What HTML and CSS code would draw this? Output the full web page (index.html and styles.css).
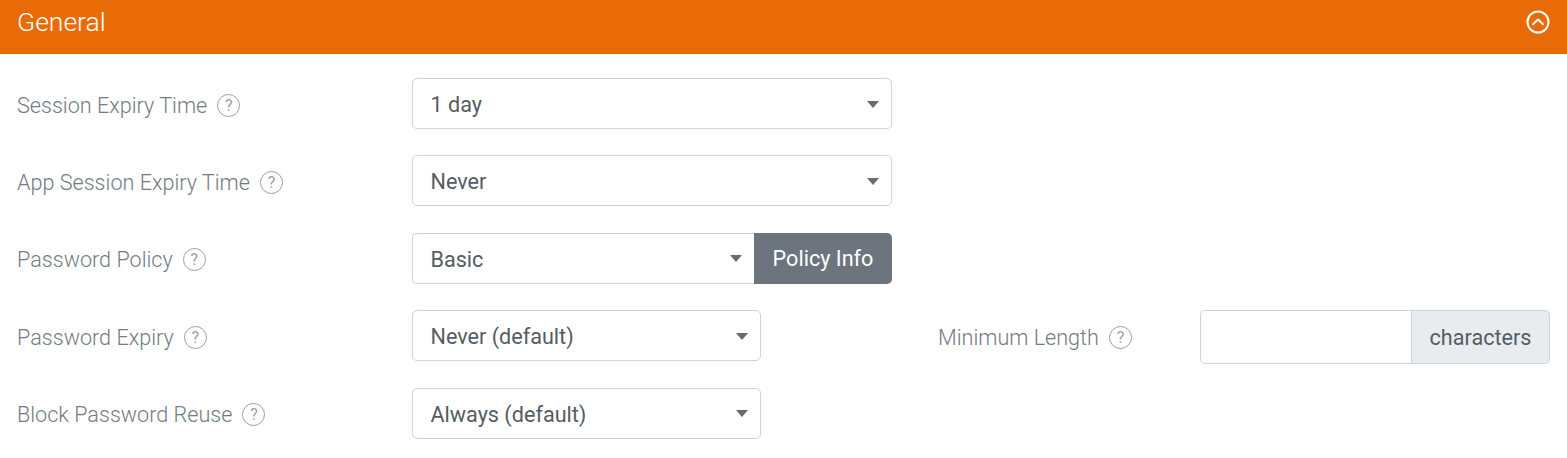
FILE: index.html
```html
<!DOCTYPE html>
<html lang="en">
<head>
    <meta charset="UTF-8">
    <title>General settings</title>
    <link rel="stylesheet" href="styles.css">
</head>
<body>
    <header class="panel-header">
        <h2>General</h2>
        <svg class="collapse-icon" width="24" height="24" viewBox="0 0 24 24" fill="none" stroke="#fff" stroke-width="2">
            <circle cx="12" cy="12" r="10.5"/>
            <path d="M7 14.2l5-4.6 5 4.6" stroke-linecap="round" stroke-linejoin="round"/>
        </svg>
    </header>
    <main class="panel-body">
        <div class="row">
            <div class="label">Session Expiry Time <span class="help">?</span></div>
            <div class="select wide"><span>1 day</span><i class="caret"></i></div>
        </div>
        <div class="row">
            <div class="label">App Session Expiry Time <span class="help">?</span></div>
            <div class="select wide"><span>Never</span><i class="caret"></i></div>
        </div>
        <div class="row">
            <div class="label">Password Policy <span class="help">?</span></div>
            <div class="group wide">
                <div class="select joined"><span>Basic</span><i class="caret"></i></div>
                <button class="info-btn" type="button">Policy Info</button>
            </div>
        </div>
        <div class="row">
            <div class="label">Password Expiry <span class="help">?</span></div>
            <div class="select short"><span>Never (default)</span><i class="caret"></i></div>
            <div class="label second">Minimum Length <span class="help">?</span></div>
            <div class="input-group">
                <input type="text" aria-label="Minimum Length">
                <span class="addon">characters</span>
            </div>
        </div>
        <div class="row">
            <div class="label">Block Password Reuse <span class="help">?</span></div>
            <div class="select short"><span>Always (default)</span><i class="caret"></i></div>
        </div>
    </main>
</body>
</html>
```

FILE: styles.css
```css
:root {
    --orange: #e96b07;
    --border: #ced4da;
    --text: #555c63;
    --label: #737b84;
}
* {
    box-sizing: border-box;
}
body {
    margin: 0;
    background-color: #fff;
    font-family: Roboto, "Liberation Sans", sans-serif;
    font-size: 21.6px;
    color: var(--text);
}
.panel-header {
    display: flex;
    justify-content: space-between;
    align-items: center;
    height: 54px;
    padding: 0 17px 9px 17px;
    background-color: var(--orange);
    border-bottom: 1px solid #d9640a;
    color: #fff;
}
.panel-header h2 {
    margin: 0 0 1px 0;
    font-size: 26.5px;
    font-weight: 300;
}
.panel-body {
    display: flex;
    flex-direction: column;
    gap: 26.4px;
    padding: 24px 17px 0 17px;
}
.row {
    display: flex;
    align-items: flex-start;
    height: 51px;
}
.label {
    display: flex;
    align-items: center;
    flex: none;
    width: 395px;
    height: 54px;
    font-weight: 300;
    color: var(--label);
}
.label.second {
    width: 262px;
    margin-left: 177px;
}
.help {
    display: inline-flex;
    justify-content: center;
    align-items: center;
    width: 23px;
    height: 23px;
    margin-left: 10px;
    border: 1.7px solid #9a9fa4;
    border-radius: 50%;
    font-size: 16px;
    font-weight: 400;
    color: #9a9fa4;
}
.select {
    display: flex;
    justify-content: space-between;
    align-items: center;
    height: 51px;
    padding: 2px 12px 0 17.5px;
    background-color: #fff;
    border: 1px solid var(--border);
    border-radius: 5px;
}
.caret {
    width: 0;
    height: 0;
    margin-top: -1px;
    border-left: 6.5px solid transparent;
    border-right: 6.5px solid transparent;
    border-top: 7px solid #6a6a6a;
}
.wide {
    width: 480px;
}
.short {
    width: 349px;
}
.group {
    display: flex;
}
.select.joined {
    flex: 1;
    border-right: 0;
    border-radius: 5px 0 0 5px;
}
.info-btn {
    width: 138px;
    height: 51px;
    padding: 0;
    background-color: #6c757d;
    border: 0;
    border-radius: 0 5px 5px 0;
    font: inherit;
    color: #fff;
}
.input-group {
    display: flex;
    width: 350px;
    height: 54px;
}
.input-group input {
    flex: 1;
    min-width: 0;
    border: 1px solid var(--border);
    border-right: 0;
    border-radius: 5px 0 0 5px;
    outline: none;
}
.addon {
    display: flex;
    align-items: center;
    justify-content: center;
    width: 139px;
    background-color: #e9ecef;
    border: 1px solid var(--border);
    border-radius: 0 5px 5px 0;
}
```
